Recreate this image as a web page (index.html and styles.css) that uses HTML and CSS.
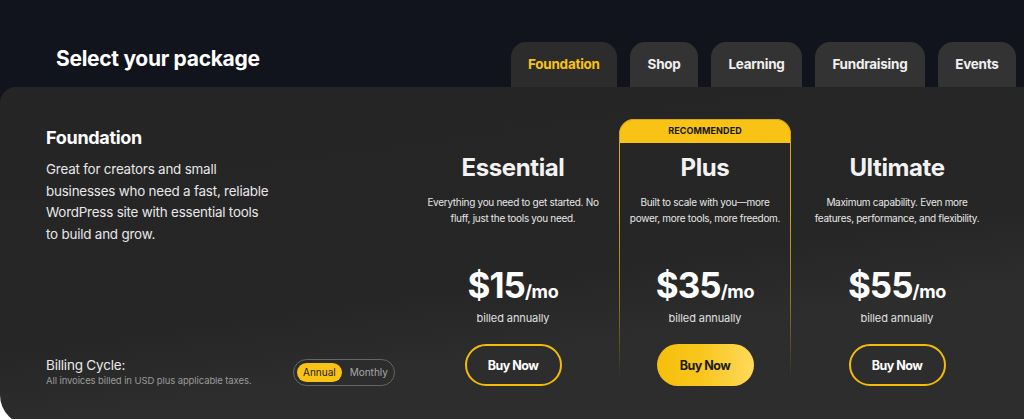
FILE: index.html
```html
<!DOCTYPE html>
<html lang="en">
<head>
<meta charset="utf-8">
<title>Select your package</title>
<link rel="stylesheet" href="styles.css">
</head>
<body>
<div class="page">
  <header class="top">
    <h1 class="title">Select your package</h1>
    <nav class="tabs">
      <a class="tab active">Foundation</a>
      <a class="tab">Shop</a>
      <a class="tab">Learning</a>
      <a class="tab">Fundraising</a>
      <a class="tab">Events</a>
    </nav>
  </header>
  <section class="panel">
    <div class="intro">
      <div class="intro-text">
        <h2 class="intro-title">Foundation</h2>
        <p class="intro-desc">Great for creators and small businesses who need a fast, reliable WordPress site with essential tools to build and grow.</p>
      </div>
      <div class="billing">
        <div class="billing-text">
          <div class="billing-label">Billing Cycle:</div>
          <div class="billing-note">All invoices billed in USD plus applicable taxes.</div>
        </div>
        <div class="toggle">
          <span class="toggle-opt on">Annual</span>
          <span class="toggle-opt">Monthly</span>
        </div>
      </div>
    </div>
    <div class="plans">
      <div class="plan">
        <div class="plan-head"></div>
        <h3 class="plan-name">Essential</h3>
        <p class="plan-desc">Everything you need to get started. No fluff, just the tools you need.</p>
        <div class="price"><span class="amount">$15</span><span class="per">/mo</span></div>
        <div class="billed">billed annually</div>
        <button class="buy">Buy Now</button>
      </div>
      <div class="plan featured">
        <div class="plan-head">RECOMMENDED</div>
        <h3 class="plan-name">Plus</h3>
        <p class="plan-desc">Built to scale with you—more power, more tools, more freedom.</p>
        <div class="price"><span class="amount">$35</span><span class="per">/mo</span></div>
        <div class="billed">billed annually</div>
        <button class="buy">Buy Now</button>
      </div>
      <div class="plan">
        <div class="plan-head"></div>
        <h3 class="plan-name">Ultimate</h3>
        <p class="plan-desc">Maximum capability. Even more features, performance, and flexibility.</p>
        <div class="price"><span class="amount">$55</span><span class="per">/mo</span></div>
        <div class="billed">billed annually</div>
        <button class="buy">Buy Now</button>
      </div>
    </div>
  </section>
</div>
</body>
</html>
```
FILE: styles.css
```css
* { box-sizing: border-box; }
html, body { margin: 0; padding: 0; }
body {
  background: #ffffff;
  font-family: Inter, "Noto Sans", Arial, sans-serif;
  color: #f2f2f2;
  overflow: hidden;
}
.page {
  width: 1024px;
  height: 419px;
  background: linear-gradient(#11141c 0, #11141c 200px, #ffffff 200px);
  overflow: hidden;
}
.top {
  height: 87px;
  display: flex;
  align-items: flex-end;
  justify-content: space-between;
  padding: 0 8px 0 56px;
}
.title {
  margin: 0 0 16px 0;
  font-size: 21px;
  font-weight: 700;
  letter-spacing: -0.3px;
  color: #ffffff;
  line-height: 24px;
}
.tabs {
  display: flex;
  gap: 13px;
}
.tab {
  height: 45px;
  display: flex;
  align-items: center;
  padding: 0 17.4px 1px;
  background: #333333;
  border-radius: 15px 15px 0 0;
  font-size: 13.5px;
  font-weight: 700;
  letter-spacing: -0.25px;
  color: #f0f0f0;
}
.tab.active {
  background: #2c2c2c;
  color: #f8c315;
}
.panel {
  height: 338px;
  display: flex;
  background: linear-gradient(172deg, #252525 0%, #262626 55%, #2d2d2d 70%, #2d2d2d 100%);
  border-radius: 16px 0 0 30px;
  margin-right: -20px;
}
.intro {
  width: 417px;
  padding: 39px 0 37px 46px;
  display: flex;
  flex-direction: column;
  justify-content: space-between;
}
.intro-title {
  margin: 0;
  font-size: 18px;
  font-weight: 700;
  line-height: 24px;
  letter-spacing: -0.3px;
  color: #ffffff;
}
.intro-desc {
  margin: 9px 0 0;
  width: 225px;
  font-size: 13.4px;
  line-height: 21.7px;
  letter-spacing: -0.2px;
  color: #e8e8e8;
}
.billing {
  display: flex;
  align-items: center;
  justify-content: space-between;
  padding-right: 22px;
}
.billing-label {
  font-size: 13.5px;
  line-height: 18px;
  color: #e8e8e8;
  letter-spacing: -0.2px;
}
.billing-note {
  font-size: 9.5px;
  line-height: 14px;
  color: #9a9a9a;
  letter-spacing: -0.1px;
}
.toggle {
  display: flex;
  align-items: center;
  gap: 2px;
  width: 102px;
  height: 27px;
  padding: 0 3px;
  border: 1px solid #666666;
  border-radius: 14px;
}
.toggle-opt {
  font-size: 10px;
  color: #a8a8a8;
  padding: 3px 6px;
  border-radius: 10px;
  line-height: 13px;
}
.toggle-opt.on {
  background: #f8c315;
  color: #1a1a1a;
}
.plans {
  display: grid;
  grid-template-columns: repeat(3, 192px);
  padding-top: 32px;
}
.plan {
  display: flex;
  flex-direction: column;
  align-items: center;
  text-align: center;
  margin: 0 10px;
  position: relative;
  border-radius: 15px 15px 0 0;
}
.plan-head {
  height: 24px;
  width: 100%;
  font-size: 9px;
  font-weight: 700;
  line-height: 24px;
  letter-spacing: 0.1px;
  color: #151515;
}
.featured::before {
  content: "";
  position: absolute;
  inset: 0;
  border: 1px solid #d4a614;
  border-bottom: none;
  border-radius: 15px 15px 0 0;
  -webkit-mask-image: linear-gradient(#000 30%, rgba(0,0,0,0.6) 60%, transparent 85%);
  mask-image: linear-gradient(#000 30%, rgba(0,0,0,0.6) 60%, transparent 85%);
  pointer-events: none;
}
.featured .plan-head {
  background: #f8c315;
  border-radius: 15px 15px 0 0;
}
.plan-name {
  margin: 11px 0 0;
  font-size: 24px;
  font-weight: 700;
  line-height: 28px;
  letter-spacing: -0.4px;
  color: #f2f2f2;
}
.plan-desc {
  margin: 12px 0 0;
  width: 176px;
  font-size: 10px;
  line-height: 16px;
  letter-spacing: -0.3px;
  color: #e6e6e6;
  height: 48px;
}
.featured .plan-desc {
  width: 156px;
}
.price {
  margin-top: 23px;
  display: flex;
  align-items: baseline;
  line-height: 40px;
}
.amount {
  font-size: 35px;
  font-weight: 700;
  letter-spacing: -1px;
  color: #ffffff;
}
.per {
  font-size: 18px;
  font-weight: 700;
  color: #ffffff;
  letter-spacing: -0.3px;
}
.billed {
  margin-top: -2px;
  font-size: 11px;
  line-height: 16px;
  color: #e0e0e0;
  letter-spacing: -0.1px;
}
.buy {
  margin-top: 18px;
  width: 97px;
  height: 42px;
  border-radius: 21px;
  border: 2px solid #f5bb0b;
  background: transparent;
  color: #ffffff;
  font-family: Inter, "Noto Sans", Arial, sans-serif;
  font-size: 12.5px;
  font-weight: 700;
  letter-spacing: -0.5px;
  cursor: pointer;
}
.featured .buy {
  border: none;
  background: linear-gradient(90deg, #f6bf0c 0%, #f8c61c 45%, #ffd95a 100%);
  color: #1a1a1a;
}
```
